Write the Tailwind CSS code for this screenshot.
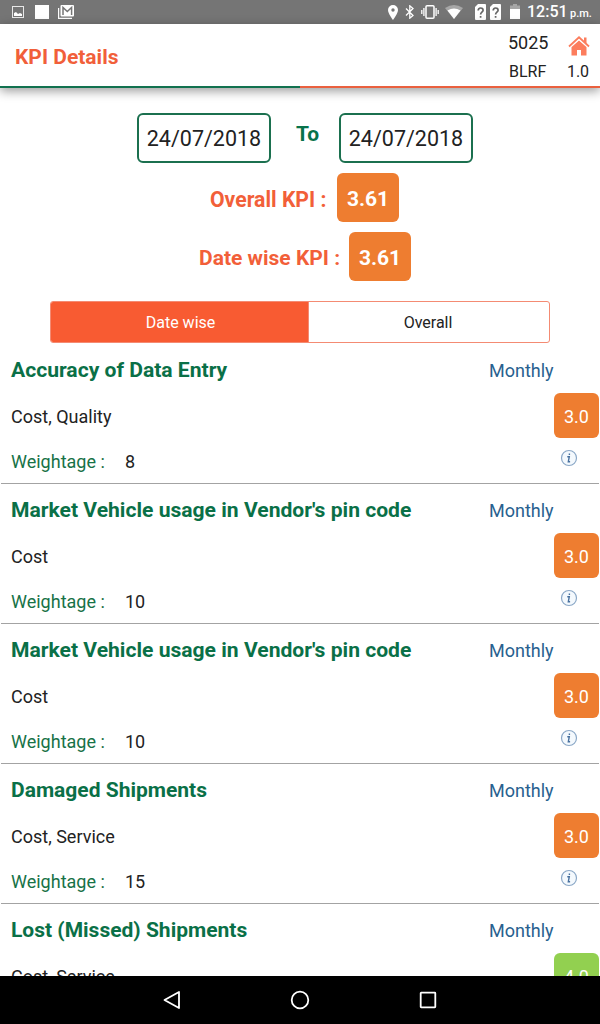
<!DOCTYPE html>
<html lang="en">

<head>
    <meta charset="UTF-8">
    <meta name="viewport" content="width=device-width, initial-scale=1.0">
    <title>KPI Details</title>
    <script src="https://cdn.jsdelivr.net/npm/@tailwindcss/browser@4"></script>
</head>

<body class="font-[Roboto,sans-serif] bg-white text-[#222]">
    <div class="w-[600px] h-[1024px] flex flex-col overflow-hidden">
        <!-- status bar -->
        <div class="h-6 shrink-0 bg-[#757575] flex items-center justify-between pl-3 pr-2 text-white">
            <div class="flex items-center">
                <svg class="w-3 h-3" viewBox="0 0 12 12">
                    <rect x=".5" y=".5" width="11" height="11" fill="none" stroke="#e8e8e8" />
                    <path d="M2 10V7l2-1 2 2 2-1 2 1v2z" fill="#fff" />
                </svg>
                <div class="w-3.5 h-3.5 bg-white ml-[11px]"></div>
                <svg class="w-4 h-3.5 ml-[9px]" viewBox="0 0 16 14">
                    <path d="M.6 3v10.4H14" fill="none" stroke="#fff" stroke-width="1.2" />
                    <rect x="2.5" width="13.5" height="11.5" rx="1" fill="#fff" />
                    <path d="M5 10V2.500l4.300 4 4.300-4V10" fill="none" stroke="#757575" stroke-width="1.500" />
                </svg>
            </div>
            <div class="flex items-center">
                <svg class="w-2.5 h-[15px]" viewBox="0 0 10 15">
                    <path fill-rule="evenodd" d="M5 0a5 5 0 0 0-5 5c0 3.6 5 10 5 10s5-6.400 5-10a5 5 0 0 0-5-5zm0 3.300a1.700 1.700 0 1 1 0 3.400 1.700 1.700 0 0 1 0-3.400z" fill="#fff" />
                </svg>
                <svg class="w-2.5 h-3.5 ml-[7px]" viewBox="0 0 10 14">
                    <path d="M1 3.500l7 7L4.800 13.200V.8L8 3.500l-7 7" fill="none" stroke="#fff" stroke-width="1.300" />
                </svg>
                <svg class="w-[18px] h-3.5 ml-[6px]" viewBox="0 0 18 14">
                    <rect x="5" y=".8" width="8" height="12.400" rx="1" fill="none" stroke="#fff" stroke-width="1.500" />
                    <path d="M2.900 3v8M15.100 3v8M.8 5v4M17.200 5v4" stroke="#fff" stroke-width="1.300" />
                </svg>
                <svg class="w-[18px] h-3.5 ml-[6px]" viewBox="0 0 18 14">
                    <path d="M9 14L0 3Q9-3 18 3z" fill="#a6a6a6" />
                    <path d="M9 14L2.500 5.500Q9 1.500 15.500 5.500z" fill="#fff" />
                </svg>
                <svg class="w-[11px] h-4 ml-3" viewBox="0 0 11 16">
                    <path d="M3 0h7a1 1 0 0 1 1 1v14a1 1 0 0 1-1 1H1a1 1 0 0 1-1-1V3z" fill="#fff" />
                    <path d="M3.200 6.500c0-3.300 4.900-3.300 4.900-.3 0 2-2.500 2-2.500 4.300M5.600 12v1.800" fill="none" stroke="#666" stroke-width="1.700" />
                </svg>
                <svg class="w-[11px] h-4 ml-1" viewBox="0 0 11 16">
                    <path d="M3 0h7a1 1 0 0 1 1 1v14a1 1 0 0 1-1 1H1a1 1 0 0 1-1-1V3z" fill="#fff" />
                    <path d="M3.200 6.500c0-3.300 4.900-3.300 4.900-.3 0 2-2.500 2-2.500 4.300M5.600 12v1.800" fill="none" stroke="#666" stroke-width="1.700" />
                </svg>
                <svg class="w-2.5 h-[15px] ml-[9px] -mt-[2px]" viewBox="0 0 10 15">
                    <path d="M0 1.500h3V0h4v1.500h3V5H0z" fill="#a6a6a6" />
                    <path d="M0 5h10v10H0z" fill="#fff" />
                </svg>
                <div class="ml-[7px] pt-0.5 flex items-baseline leading-6">
                    <span class="w-[43px] text-[16px] font-medium whitespace-nowrap">12:51</span>
                    <span class="w-[22px] text-[11px] font-medium whitespace-nowrap">p.m.</span>
                </div>
            </div>
        </div>

        <!-- header -->
        <header class="relative z-10 h-16 shrink-0 bg-white shadow-[0_3px_10px_rgba(0,0,0,0.4)] flex flex-col">
            <div class="flex-1 flex justify-between pl-[15px] pr-[10px]">
                <h1 class="text-[21px] leading-[26px] font-bold text-[#f15f3a] mt-5">KPI Details</h1>
                <div class="flex">
                    <div class="w-[58px]">
                        <p class="text-[18px] leading-6 mt-[7px]">5025</p>
                        <p class="text-[16px] leading-6 mt-[5px] pl-px">BLRF</p>
                    </div>
                    <div class="w-6 flex flex-col items-center">
                        <svg class="w-[22px] h-5 mt-3 ml-0.5" viewBox="0 0 22 20">
                            <path d="M16 1.500h2.500V7H16zM11 4.500l7.500 6.500v8.500H13V14H9v5.500H3.500V11z" fill="#fc7d5d" />
                            <path d="M1 10.500L11 1.300l10 9.200" fill="none" stroke="#fc7d5d" stroke-width="1.800" />
                            <path d="M2.500 11.500L11 3.700l8.500 7.800" fill="none" stroke="#fff" stroke-width=".5" />
                        </svg>
                        <p class="text-[16px] leading-6 mt-1">1.0</p>
                    </div>
                </div>
            </div>
            <div class="h-0.5 flex">
                <div class="w-1/2 bg-[#11714f]"></div>
                <div class="w-1/2 bg-[#ea603e]"></div>
            </div>
        </header>

        <main class="flex-1 min-h-0 overflow-hidden">
            <!-- dates -->
            <div class="flex pt-[25px] pl-[137px]">
                <div class="w-[134px] h-[50px] border-2 border-[#1b704f] rounded-md text-[21.5px] leading-[48px] text-center">24/07/2018</div>
                <div class="w-[68px] pl-[25px] text-[21px] leading-[42px] font-bold text-[#08734a]">To</div>
                <div class="w-[134px] h-[50px] border-2 border-[#1b704f] rounded-md text-[21.5px] leading-[48px] text-center">24/07/2018</div>
            </div>
            <div class="flex mt-[10px] h-[49px] pl-[210px] text-[21px] leading-[53px] font-bold">
                <div class="w-[127px] whitespace-nowrap text-[#f25f39] text-[21.2px]">Overall KPI :</div>
                <div class="w-[62px] h-[49px] rounded-md bg-[#ee7d30] text-white text-center">3.61</div>
            </div>
            <div class="flex mt-[10px] h-[49px] pl-[199px] text-[21px] leading-[53px] font-bold">
                <div class="w-[150px] whitespace-nowrap text-[#f25f39]">Date wise KPI :</div>
                <div class="w-[62px] h-[49px] rounded-md bg-[#ee7d30] text-white text-center">3.61</div>
            </div>

            <!-- tabs -->
            <div class="flex mt-5 mx-[50px] h-[42px] border border-[#f48b73] rounded-[3px] overflow-hidden text-[16px] leading-[41px] text-center">
                <div class="w-[257px] bg-[#f85b32] text-white pl-0.5">Date wise</div>
                <div class="flex-1 border-l border-[#f48b73] pr-0.5">Overall</div>
            </div>

            <!-- kpi list -->
            <div class="mt-px">
                <div class="h-[140px] mx-px pl-[10px] border-b border-[#a3a3a3] flex justify-between text-[18px] leading-6">
                    <div>
                        <h2 class="text-[21.1px] leading-[26px] font-bold text-[#0a7047] mt-[13px]">Accuracy of Data Entry</h2>
                        <p class="mt-[22px]">Cost, Quality</p>
                        <p class="mt-[21px] flex"><span class="w-[114px] text-[#177247]">Weightage :</span>8</p>
                    </div>
                    <div class="w-[110px] flex flex-col">
                        <p class="text-[#28618f] mt-[15px]">Monthly</p>
                        <div class="w-[45px] h-[45px] ml-auto mt-[10px] rounded-md bg-[#ee7d30] text-white leading-[47px] text-center">3.0</div>
                        <svg class="w-[18px] h-[18px] ml-[71px] mt-[11px]" viewBox="0 0 18 18">
                            <circle cx="9" cy="9" r="7.500" fill="#f4f9fd" stroke="#8ba8c7" stroke-width="1.200" />
                            <path d="M7.300 7.700h2L8.300 12.700h1.800M9.400 4.500v1.400" fill="none" stroke="#48719f" stroke-width="1.400" />
                        </svg>
                    </div>
                </div>
                <div class="h-[140px] mx-px pl-[10px] border-b border-[#a3a3a3] flex justify-between text-[18px] leading-6">
                    <div>
                        <h2 class="text-[21.1px] leading-[26px] font-bold text-[#0a7047] mt-[13px]">Market Vehicle usage in Vendor's pin code</h2>
                        <p class="mt-[22px]">Cost</p>
                        <p class="mt-[21px] flex"><span class="w-[114px] text-[#177247]">Weightage :</span>10</p>
                    </div>
                    <div class="w-[110px] flex flex-col">
                        <p class="text-[#28618f] mt-[15px]">Monthly</p>
                        <div class="w-[45px] h-[45px] ml-auto mt-[10px] rounded-md bg-[#ee7d30] text-white leading-[47px] text-center">3.0</div>
                        <svg class="w-[18px] h-[18px] ml-[71px] mt-[11px]" viewBox="0 0 18 18">
                            <circle cx="9" cy="9" r="7.500" fill="#f4f9fd" stroke="#8ba8c7" stroke-width="1.200" />
                            <path d="M7.300 7.700h2L8.300 12.700h1.800M9.400 4.500v1.400" fill="none" stroke="#48719f" stroke-width="1.400" />
                        </svg>
                    </div>
                </div>
                <div class="h-[140px] mx-px pl-[10px] border-b border-[#a3a3a3] flex justify-between text-[18px] leading-6">
                    <div>
                        <h2 class="text-[21.1px] leading-[26px] font-bold text-[#0a7047] mt-[13px]">Market Vehicle usage in Vendor's pin code</h2>
                        <p class="mt-[22px]">Cost</p>
                        <p class="mt-[21px] flex"><span class="w-[114px] text-[#177247]">Weightage :</span>10</p>
                    </div>
                    <div class="w-[110px] flex flex-col">
                        <p class="text-[#28618f] mt-[15px]">Monthly</p>
                        <div class="w-[45px] h-[45px] ml-auto mt-[10px] rounded-md bg-[#ee7d30] text-white leading-[47px] text-center">3.0</div>
                        <svg class="w-[18px] h-[18px] ml-[71px] mt-[11px]" viewBox="0 0 18 18">
                            <circle cx="9" cy="9" r="7.500" fill="#f4f9fd" stroke="#8ba8c7" stroke-width="1.200" />
                            <path d="M7.300 7.700h2L8.300 12.700h1.800M9.400 4.500v1.400" fill="none" stroke="#48719f" stroke-width="1.400" />
                        </svg>
                    </div>
                </div>
                <div class="h-[140px] mx-px pl-[10px] border-b border-[#a3a3a3] flex justify-between text-[18px] leading-6">
                    <div>
                        <h2 class="text-[21px] leading-[26px] font-bold text-[#0a7047] mt-[13px]">Damaged Shipments</h2>
                        <p class="mt-[22px]">Cost, Service</p>
                        <p class="mt-[21px] flex"><span class="w-[114px] text-[#177247]">Weightage :</span>15</p>
                    </div>
                    <div class="w-[110px] flex flex-col">
                        <p class="text-[#28618f] mt-[15px]">Monthly</p>
                        <div class="w-[45px] h-[45px] ml-auto mt-[10px] rounded-md bg-[#ee7d30] text-white leading-[47px] text-center">3.0</div>
                        <svg class="w-[18px] h-[18px] ml-[71px] mt-[11px]" viewBox="0 0 18 18">
                            <circle cx="9" cy="9" r="7.500" fill="#f4f9fd" stroke="#8ba8c7" stroke-width="1.200" />
                            <path d="M7.300 7.700h2L8.300 12.700h1.800M9.400 4.500v1.400" fill="none" stroke="#48719f" stroke-width="1.400" />
                        </svg>
                    </div>
                </div>
                <div class="mx-px pl-[10px] flex justify-between text-[18px] leading-6">
                    <div>
                        <h2 class="text-[21px] leading-[26px] font-bold text-[#0a7047] mt-[13px]">Lost (Missed) Shipments</h2>
                        <p class="mt-[22px]">Cost, Service</p>
                    </div>
                    <div class="w-[110px] flex flex-col">
                        <p class="text-[#28618f] mt-[15px]">Monthly</p>
                        <div class="w-[45px] h-[45px] ml-auto mt-[10px] rounded-md bg-[#92d050] text-white leading-[47px] text-center">4.0</div>
                    </div>
                </div>
            </div>
        </main>

        <!-- navigation bar -->
        <nav class="h-12 shrink-0 bg-black flex items-center justify-center gap-[108px]">
            <svg class="w-5 h-5" viewBox="0 0 20 20">
                <path d="M17 2v16L2.500 10z" fill="none" stroke="#fff" stroke-width="1.800" stroke-linejoin="round" />
            </svg>
            <svg class="w-5 h-5" viewBox="0 0 20 20">
                <circle cx="10" cy="10" r="8.300" fill="none" stroke="#fff" stroke-width="1.800" />
            </svg>
            <svg class="w-5 h-5" viewBox="0 0 20 20">
                <rect x="2.700" y="2.700" width="14.600" height="14.600" rx=".5" fill="none" stroke="#fff" stroke-width="1.800" />
            </svg>
        </nav>
    </div>
</body>

</html>
